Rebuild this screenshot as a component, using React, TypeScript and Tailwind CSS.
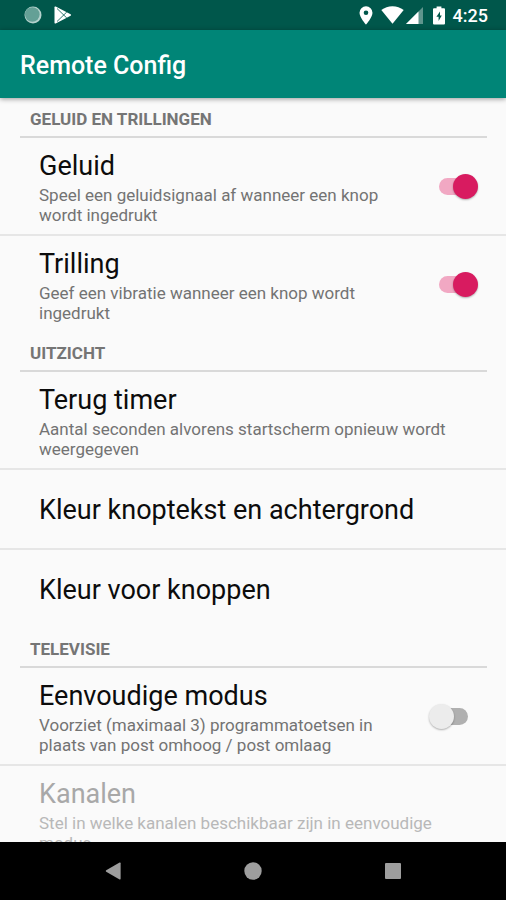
import { useId, useState } from 'react';
import type { ReactNode } from 'react';

export default function App() {
  const [sound, setSound] = useState(true);
  const [vibration, setVibration] = useState(true);
  const [simpleMode, setSimpleMode] = useState(false);

  return (
    <div className="flex h-screen flex-col bg-[#fafafa] font-[Roboto,sans-serif] text-[#0c0c0c]">
      <StatusBar />

      <header className="z-10 flex h-[68px] shrink-0 items-center bg-[#008577] px-5 pt-1 shadow-[0_1px_5px_rgba(0,0,0,0.4)]">
        <h1 className="text-[25px] leading-8 font-medium text-white">Remote Config</h1>
      </header>

      <main className="min-h-0 flex-1 overflow-y-auto [scrollbar-width:none]">
        <Section title="Geluid en trillingen">
          <SwitchRow
            title="Geluid"
            summary="Speel een geluidsignaal af wanneer een knop wordt ingedrukt"
            checked={sound}
            onChange={setSound}
          />
          <SwitchRow
            title="Trilling"
            summary="Geef een vibratie wanneer een knop wordt ingedrukt"
            checked={vibration}
            onChange={setVibration}
          />
        </Section>

        <Section title="Uitzicht">
          <ButtonRow
            title="Terug timer"
            summary="Aantal seconden alvorens startscherm opnieuw wordt weergegeven"
          />
          <ButtonRow title="Kleur knoptekst en achtergrond" />
          <ButtonRow title="Kleur voor knoppen" />
        </Section>

        <Section title="Televisie">
          <SwitchRow
            title="Eenvoudige modus"
            summary="Voorziet (maximaal 3) programmatoetsen in plaats van post omhoog / post omlaag"
            checked={simpleMode}
            onChange={setSimpleMode}
          />
          <ButtonRow
            title="Kanalen"
            summary="Stel in welke kanalen beschikbaar zijn in eenvoudige modus"
            disabled={!simpleMode}
          />
        </Section>
      </main>

      <NavigationBar />
    </div>
  );
}

function Section({ title, children }: { title: string; children: ReactNode }) {
  return (
    <section>
      <h2 className="mr-[19px] ml-5 flex h-10 items-center border-b-2 border-[#d9d9d9] px-[10px] pt-1 text-[17px] leading-5 font-bold text-[#757575] uppercase">
        {title}
      </h2>
      <div className="divide-y-2 divide-[#e6e6e6]">{children}</div>
    </section>
  );
}

function SwitchRow({
  title,
  summary,
  checked,
  onChange,
}: {
  title: string;
  summary: string;
  checked: boolean;
  onChange: (checked: boolean) => void;
}) {
  const id = useId();

  return (
    <div className="flex items-center pr-7 pl-[39px]">
      <label htmlFor={id} className="min-w-0 flex-1 pt-3 pr-4 pb-[9px]">
        <span className="block text-[27px] leading-8">{title}</span>
        <span className="mt-[3px] block text-[17px] leading-5 text-[#737373]">{summary}</span>
      </label>
      <input
        id={id}
        type="checkbox"
        role="switch"
        checked={checked}
        onChange={(e) => onChange(e.target.checked)}
        className="relative h-[25px] w-[49px] shrink-0 appearance-none before:absolute before:inset-x-[10px] before:inset-y-1 before:rounded-full before:bg-[#b0b0b0] after:absolute after:top-0 after:left-0 after:size-[25px] after:rounded-full after:bg-[#ececec] after:shadow-[0_1px_2px_rgba(0,0,0,0.3)] checked:before:bg-[#f1a8c3] checked:after:left-6 checked:after:bg-[#d81b60]"
      />
    </div>
  );
}

function ButtonRow({
  title,
  summary,
  disabled = false,
}: {
  title: string;
  summary?: string;
  disabled?: boolean;
}) {
  return (
    <button
      type="button"
      disabled={disabled}
      className={`block w-full pr-10 pl-[39px] text-left ${
        summary ? 'pt-3 pb-[9px]' : 'pt-6 pb-[22px]'
      }`}
    >
      <span className={`block text-[27px] leading-8 ${disabled ? 'text-[#a8a8a8]' : ''}`}>
        {title}
      </span>
      {summary && (
        <span
          className={`mt-[3px] block text-[17px] leading-5 ${
            disabled ? 'text-[#b8b8b8]' : 'text-[#737373]'
          }`}
        >
          {summary}
        </span>
      )}
    </button>
  );
}

function StatusBar() {
  return (
    <div className="flex h-[30px] shrink-0 items-center justify-between bg-[#00574b] pr-[18px] pl-6 text-white">
      <div className="flex items-center gap-3">
        <svg width="18" height="18" viewBox="0 0 18 18" aria-hidden="true">
          <circle cx="9" cy="9" r="8.5" fill="#b5d2cd" />
          <circle cx="8.3" cy="8.5" r="7.3" fill="#64a096" />
        </svg>
        <svg width="18" height="18" viewBox="0 0 18 18" aria-hidden="true">
          <path d="M0.5 1.2Q0.5 0 1.7 0.6L16.6 8.2Q17.6 9 16.6 9.8L1.7 17.4Q0.5 18 0.5 16.8Z" fill="#fff" />
          <path d="M3 2.5L12.8 12M3 15.5L12.8 6" fill="none" stroke="#00574b" strokeWidth="0.8" />
        </svg>
      </div>

      <div className="flex items-center">
        <svg className="mr-2" width="14" height="19" viewBox="0 0 14 19" aria-hidden="true">
          <path
            d="M7 0.3A6.5 6.5 0 0 0 0.5 6.8C0.5 11.4 7 18.7 7 18.7S13.5 11.4 13.5 6.8A6.5 6.5 0 0 0 7 0.3Z"
            fill="#fff"
          />
          <circle cx="7" cy="6.8" r="2.3" fill="#00574b" />
        </svg>
        <svg className="mr-0.5" width="23" height="18" viewBox="0 0 23 18" aria-hidden="true">
          <path d="M11.5 17.8L0.3 4.1A18 18 0 0 1 22.7 4.1Z" fill="#fff" />
        </svg>
        <svg className="mr-2.5" width="17" height="17" viewBox="0 0 17 17" aria-hidden="true">
          <path d="M0 17L17 0V17Z" fill="#5f958d" />
          <path d="M0 17L12.5 4.5V17Z" fill="#fff" />
        </svg>
        <svg className="mr-2" width="12" height="19" viewBox="0 0 12 19" aria-hidden="true">
          <path d="M3.6 0.5H8.4V2.3H11Q12 2.3 12 3.3V17.5Q12 18.5 11 18.5H1Q0 18.5 0 17.5V3.3Q0 2.3 1 2.3H3.6Z" fill="#fff" />
          <path d="M7 5.5L3.4 10.8H5.6V15L8.8 9.5H7Z" fill="#00574b" />
        </svg>
        <time className="pt-px text-[18px] leading-5 font-medium">4:25</time>
      </div>
    </div>
  );
}

function NavigationBar() {
  return (
    <nav className="flex h-[58px] shrink-0 items-center justify-center gap-[116px] bg-black text-[#9e9e9e]">
      <button type="button" aria-label="Terug">
        <svg width="24" height="24" viewBox="0 0 24 24" fill="currentColor" aria-hidden="true">
          <path d="M5.2 11.3L18.6 3.6Q19.6 3.2 19.6 4.2V19.8Q19.6 20.8 18.6 20.4L5.2 12.7Q4.2 12 5.2 11.3Z" />
        </svg>
      </button>
      <button type="button" aria-label="Startscherm">
        <svg width="24" height="24" viewBox="0 0 24 24" fill="currentColor" aria-hidden="true">
          <circle cx="12" cy="12" r="8.7" />
        </svg>
      </button>
      <button type="button" aria-label="Recente apps">
        <svg width="24" height="24" viewBox="0 0 24 24" fill="currentColor" aria-hidden="true">
          <rect x="4" y="4" width="16" height="16" rx="1" />
        </svg>
      </button>
    </nav>
  );
}
